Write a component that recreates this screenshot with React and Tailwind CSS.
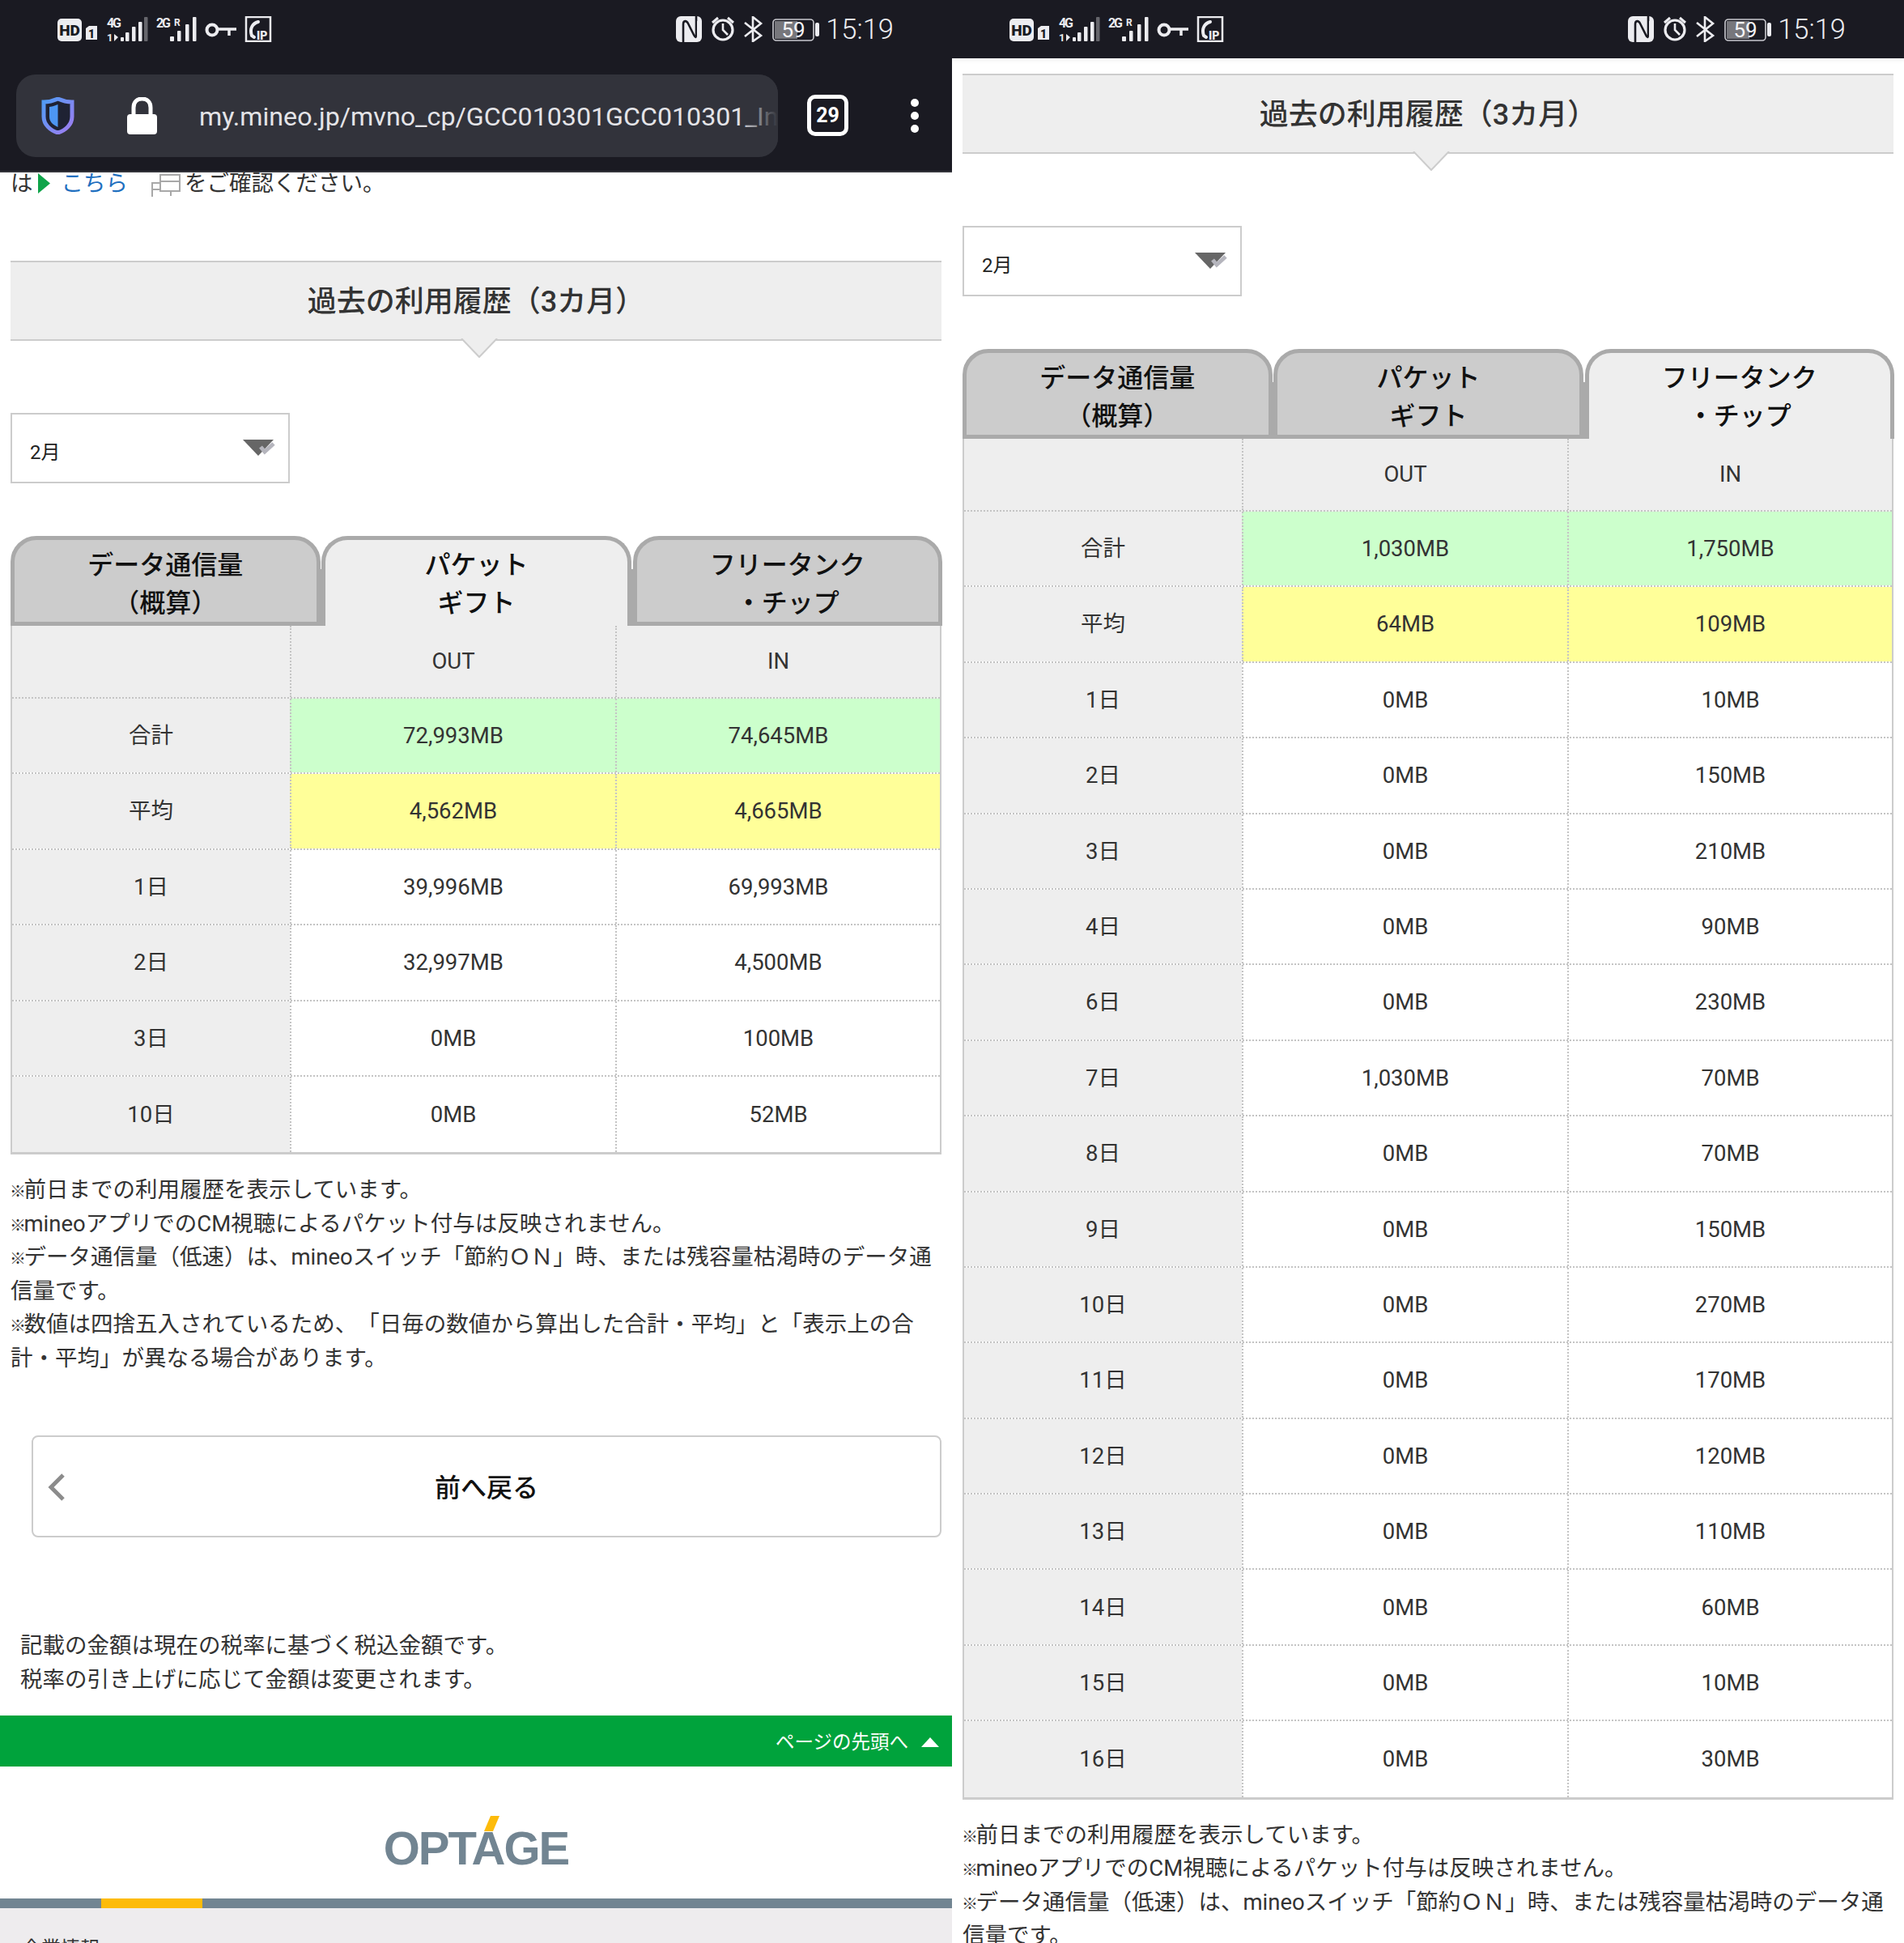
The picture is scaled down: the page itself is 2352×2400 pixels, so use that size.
import React from "react";

const leftRows = [
  ["合計", "72,993MB", "74,645MB", "g"],
  ["平均", "4,562MB", "4,665MB", "y"],
  ["1日", "39,996MB", "69,993MB"],
  ["2日", "32,997MB", "4,500MB"],
  ["3日", "0MB", "100MB"],
  ["10日", "0MB", "52MB"],
];
const rightRows = [
  ["合計", "1,030MB", "1,750MB", "g"],
  ["平均", "64MB", "109MB", "y"],
  ["1日", "0MB", "10MB"],
  ["2日", "0MB", "150MB"],
  ["3日", "0MB", "210MB"],
  ["4日", "0MB", "90MB"],
  ["6日", "0MB", "230MB"],
  ["7日", "1,030MB", "70MB"],
  ["8日", "0MB", "70MB"],
  ["9日", "0MB", "150MB"],
  ["10日", "0MB", "270MB"],
  ["11日", "0MB", "170MB"],
  ["12日", "0MB", "120MB"],
  ["13日", "0MB", "110MB"],
  ["14日", "0MB", "60MB"],
  ["15日", "0MB", "10MB"],
  ["16日", "0MB", "30MB"],
];

function StatusLeft() {
  const f = "Roboto, sans-serif";
  return (
    <svg width="265" height="32" viewBox="0 0 265 32" fill="none">
      <rect x="0" y="3" width="30" height="28" rx="5" fill="#ececf0" />
      <text x="15" y="24" textAnchor="middle" fontFamily={f} fontWeight="900" fontSize="19" fill="#1a1a22">HD</text>
      <path d="M35 15 L39 12 H49 V29 H35 Z" fill="#ececf0" />
      <text x="42" y="27" textAnchor="middle" fontFamily={f} fontWeight="900" fontSize="14" fill="#1a1a22">1</text>
      <text x="61" y="14" fontFamily={f} fontWeight="700" fontSize="16" fill="#ececf0" textLength="18">4G</text>
      <text x="61" y="31" fontFamily={f} fontWeight="700" fontSize="13" fill="#ececf0" textLength="8">1</text>
      <path d="M70 22 V31 L75 26 Z" fill="#ececf0" />
      <rect x="78" y="26" width="4" height="5" rx="1" fill="#ececf0" />
      <rect x="84" y="20" width="4.5" height="11" rx="1" fill="#ececf0" />
      <rect x="92" y="13" width="4.5" height="18" rx="1" fill="#ececf0" />
      <rect x="100" y="7" width="4.5" height="24" rx="1" fill="#ececf0" />
      <rect x="107" y="1" width="4.5" height="30" rx="1" fill="#66666c" />
      <text x="122" y="14" fontFamily={f} fontWeight="700" fontSize="16" fill="#ececf0" textLength="18">2G</text>
      <text x="144" y="12" fontFamily={f} fontWeight="700" fontSize="12" fill="#ececf0">R</text>
      <rect x="139" y="25" width="5" height="6" rx="1" fill="#ececf0" />
      <rect x="148" y="18" width="4.5" height="13" rx="1" fill="#ececf0" />
      <rect x="158" y="10" width="4.5" height="21" rx="1" fill="#ececf0" />
      <rect x="167" y="1" width="4.5" height="30" rx="1" fill="#ececf0" />
      <circle cx="191" cy="17" r="6.5" stroke="#ececf0" strokeWidth="4" />
      <path d="M198 16 H221 M212 16 V24" stroke="#ececf0" strokeWidth="3.5" />
      <rect x="233" y="1" width="30" height="30" stroke="#ececf0" strokeWidth="2.5" />
      <path d="M248 7 C241 9 237 15 240 24 L243 26" stroke="#ececf0" strokeWidth="4" strokeLinecap="round" />
      <text x="246" y="29" fontFamily={f} fontWeight="900" fontSize="14" fill="#ececf0">IP</text>
    </svg>
  );
}

function StatusRight() {
  return (
    <svg width="177" height="32" viewBox="0 0 177 32" fill="none">
      <rect x="0" y="0" width="32" height="32" rx="6" fill="#ececf0" />
      <path d="M9 32 V10 C9 5 13 5 15 9 L22 23 C24 27 25 27 25 22 V0" stroke="#1a1a22" strokeWidth="2.6" />
      <path d="M5 6 V26 M27 6 V26" stroke="#ececf0" strokeWidth="2" />
      <circle cx="58" cy="17" r="12" stroke="#ececf0" strokeWidth="3.2" />
      <path d="M58 9 V17 L64 23" stroke="#ececf0" strokeWidth="2.6" />
      <path d="M45 8 L52 2 M71 8 L64 2" stroke="#ececf0" strokeWidth="3" />
      <path d="M85 8 L105 24 L95 31 V1 L105 9 L85 25" stroke="#ececf0" strokeWidth="2.6" />
      <rect x="120" y="4" width="50" height="26" rx="4" stroke="#c9c9cf" strokeWidth="1.6" />
      <rect x="122" y="6" width="28" height="22" fill="#77777c" />
      <text x="145" y="26" textAnchor="middle" fontFamily="Roboto, sans-serif" fontSize="26" fill="#f4f4f6">59</text>
      <rect x="172" y="8" width="5" height="17" rx="2" fill="#ececf0" />
    </svg>
  );
}

function StatusBar() {
  return (
    <div className="h-[72px] flex items-center justify-between pl-[71px] pr-[72px] text-[#ececf0]">
      <StatusLeft />
      <div className="flex items-center gap-[8px]">
        <StatusRight />
        <span className="font-[Roboto,sans-serif] text-[34.5px] font-light leading-none">15:19</span>
      </div>
    </div>
  );
}

function Shield() {
  return (
    <svg width="41" height="46" viewBox="0 0 41 46" fill="none">
      <defs>
        <linearGradient id="shg" x1="0" y1="0" x2="1" y2="1">
          <stop offset="0" stopColor="#4f9cf5" />
          <stop offset="1" stopColor="#a07cf0" />
        </linearGradient>
      </defs>
      <path d="M20.5 2 C27 5 33 6 38 6 V24 C38 34 30 41 20.5 44 C11 41 3 34 3 24 V6 C8 6 14 5 20.5 2 Z" fill="#1f2233" stroke="url(#shg)" strokeWidth="5" />
      <path d="M20.5 9 C16 11 12 12 10 12 V24 C10 30 14 34 20.5 37 Z" fill="#4d96f2" />
    </svg>
  );
}

function Lock() {
  return (
    <svg width="37" height="46" viewBox="0 0 37 46" fill="none">
      <path d="M8 24 V13 C8 6 12 2 18.5 2 C25 2 29 6 29 13 V24" stroke="#fff" strokeWidth="5" />
      <rect x="0" y="21" width="37" height="25" rx="4" fill="#fff" />
    </svg>
  );
}

function Chrome() {
  return (
    <div className="h-[141px] flex items-start border-b-2 border-[#33343a]">
      <div className="relative ml-[20px] mt-[20px] w-[941px] h-[102px] rounded-[24px] bg-[#32333b] flex items-center overflow-hidden">
        <div className="ml-[31px] flex items-center"><Shield /></div>
        <div className="ml-[31px] w-[2px] h-[61px] bg-[#55565e]" />
        <div className="ml-[34px] flex items-center"><Lock /></div>
        <span className="ml-[52px] mt-[2px] font-[Roboto,sans-serif] text-[32.2px] text-[#e4e4e8] whitespace-nowrap">my.mineo.jp/mvno_cp/GCC010301GCC010301_In</span>
        <div className="absolute right-0 top-0 bottom-0 w-[50px] bg-gradient-to-r from-transparent to-[#32333b]" />
      </div>
      <div className="ml-[36px] mt-[45px] w-[51px] h-[51px] rounded-[10px] border-[5px] border-white flex items-center justify-center font-[Roboto,sans-serif] font-bold text-[25px] text-white leading-none">29</div>
      <div className="ml-[77px] mt-[50px] flex flex-col gap-[6px]">
        <div className="w-[10px] h-[10px] rounded-full bg-white" />
        <div className="w-[10px] h-[10px] rounded-full bg-white" />
        <div className="w-[10px] h-[10px] rounded-full bg-white" />
      </div>
    </div>
  );
}

function Heading() {
  return (
    <div className="relative shrink-0 mx-[13px] h-[99px] bg-[#eeeeee] border-y-2 border-[#cccccc] flex items-center justify-center pt-[2px] text-[36px] font-medium text-[#333333]">
      <span>過去の利用履歴（3カ月）</span>
      <svg className="absolute left-[556px] top-[94px]" width="46" height="24" viewBox="0 0 46 24">
        <path d="M1 0 L23 23 L45 0 Z" fill="#eeeeee" />
        <path d="M1 0 L23 23 L45 0" fill="none" stroke="#cccccc" strokeWidth="2" />
      </svg>
    </div>
  );
}

function SelectBox() {
  return (
    <div className="relative shrink-0 ml-[13px] mt-[89px] w-[345px] h-[87px] border-2 border-[#cccccc] bg-white flex items-center pl-[22px] pt-[10px] text-[24px] text-[#222222]">
      <span>2月</span>
      <svg className="absolute left-[285px] top-[31px]" width="40" height="22" viewBox="0 0 40 22">
        <path d="M0 0 H38 L19 20 Z" fill="#666666" />
        <path d="M22 9 L27 15 L38 5" fill="none" stroke="#b5b5bd" strokeWidth="5" />
      </svg>
    </div>
  );
}

function Tab({ lines, active }) {
  const tone = active
    ? "bg-[#eeeeee] border-b-0"
    : "bg-[#cccccc] border-b-[5px]";
  return (
    <div className={"w-[382.5px] h-[111px] border-x-[5px] border-t-[5px] border-[#aaaaaa] rounded-t-[32px] pt-[8px] text-center text-[32px] leading-[47px] font-medium text-[#111111] " + tone}>
      <div>{lines[0]}</div>
      <div>{lines[1]}</div>
    </div>
  );
}

function Tabs({ active }) {
  const filler = <div className="self-end w-[1.75px] h-[70px] bg-[#aaaaaa]" />;
  return (
    <div className="flex shrink-0 ml-[13px] mt-[65px] w-[1151px]">
      <Tab lines={["データ通信量", "（概算）"]} active={active === 0} />
      {filler}
      <Tab lines={["パケット", "ギフト"]} active={active === 1} />
      {filler}
      <Tab lines={["フリータンク", "・チップ"]} active={active === 2} />
    </div>
  );
}

function Table({ rows }) {
  return (
    <div className="shrink-0 mx-[13px] border-x-2 border-b-[3px] border-[#cccccc] text-[27.5px] text-[#333333]">
      <div className="flex h-[90px] bg-[#eeeeee] border-b-2 border-dotted border-[#c4c4c4]">
        <div className="w-[343px]" />
        <div className="w-[402px] border-l-2 border-dotted border-[#c4c4c4] flex items-center justify-center">OUT</div>
        <div className="w-[401px] border-l-2 border-dotted border-[#c4c4c4] flex items-center justify-center">IN</div>
      </div>
      {rows.map((r) => {
        const bg = r[3] === "g" ? "bg-[#ccffcc]" : r[3] === "y" ? "bg-[#ffff99]" : "bg-white";
        return (
          <div key={r[0]} className="flex h-[93.4px] border-b-2 border-dotted border-[#c4c4c4] last:border-b-0">
            <div className="w-[343px] bg-[#eeeeee] flex items-center justify-center">{r[0]}</div>
            <div className={"w-[402px] border-l-2 border-dotted border-[#c4c4c4] flex items-center justify-center " + bg}>{r[1]}</div>
            <div className={"w-[401px] border-l-2 border-dotted border-[#c4c4c4] flex items-center justify-center " + bg}>{r[2]}</div>
          </div>
        );
      })}
    </div>
  );
}

function Star() {
  return <span className="inline-block w-[16.5px] -ml-[1px] mr-[1px] text-[20px] leading-none">※</span>;
}

function Notes() {
  return (
    <div className="shrink-0 mx-[13px] mt-[23px] text-[27.5px] leading-[41.5px] text-[#333333] [text-spacing-trim:space-all]">
      <div><Star />前日までの利用履歴を表示しています。</div>
      <div><Star />mineoアプリでのCM視聴によるパケット付与は反映されません。</div>
      <div><Star />データ通信量（低速）は、mineoスイッチ「節約ＯＮ」時、または残容量枯渇時のデータ通信量です。</div>
      <div><Star />数値は四捨五入されているため、「日毎の数値から算出した合計・平均」と「表示上の合計・平均」が異なる場合があります。</div>
    </div>
  );
}

export default function App() {
  return (
    <div className="grid grid-cols-2 w-[2352px] h-[2400px] overflow-hidden bg-white font-[Roboto,'Noto_Sans_CJK_JP',sans-serif]">
      <div className="flex flex-col h-[2400px] overflow-hidden">
        <div className="shrink-0 bg-[#1a1a22]">
          <StatusBar />
          <Chrome />
        </div>
        <div className="h-[109px] shrink-0 overflow-hidden pl-[13px] text-[27.5px] leading-[41.5px] text-[#333333]">
          <div className="flex items-start -mt-[7px] h-[48px]">
            <span>は</span>
            <svg className="mt-[8px] ml-[6px]" width="15" height="25" viewBox="0 0 15 25"><path d="M0 0 L15 12.5 L0 25 Z" fill="#0fa44a" /></svg>
            <span className="ml-[14px] text-[#1e6fbf]">こちら</span>
            <svg className="mt-[9px] ml-[29px]" width="36" height="28" viewBox="0 0 36 28" fill="none" stroke="#a8a8a8" strokeWidth="2">
              <path d="M11 1 H35 V21 H11 Z M11 9 H35 M1 28 V11 H11 M1 19 H11 M24 21 V27" />
            </svg>
            <span className="ml-[5px]">をご確認ください。</span>
          </div>
        </div>
        <Heading />
        <SelectBox />
        <Tabs active={1} />
        <Table rows={leftRows} />
        <Notes />
        <div className="relative ml-[39px] mt-[75px] w-[1124px] h-[126px] shrink-0 border-2 border-[#cccccc] rounded-[8px] flex items-center justify-center pt-[3px] text-[32px] font-medium text-[#111111]">
          <svg className="absolute left-[17px] top-[45px]" width="24" height="34" viewBox="0 0 24 34" fill="none">
            <path d="M20 2 L5 17 L20 32" stroke="#8c8c8c" strokeWidth="5" />
          </svg>
          <span>前へ戻る</span>
        </div>
        <div className="shrink-0 ml-[25px] mt-[113px] text-[27.5px] leading-[41.5px] text-[#333333]">
          <div>記載の金額は現在の税率に基づく税込金額です。</div>
          <div>税率の引き上げに応じて金額は変更されます。</div>
        </div>
        <div className="mt-[24px] h-[63px] shrink-0 bg-[#00a33c] flex items-center justify-end pr-[16px] pt-[3px] text-[23.5px] text-white">
          <span>ページの先頭へ</span>
          <svg className="ml-[16px]" width="22" height="12" viewBox="0 0 22 12"><path d="M11 0 L22 12 H0 Z" fill="#ffffff" /></svg>
        </div>
        <div className="relative h-[163px] shrink-0 flex items-start justify-center">
          <span className="mt-[69px] font-['Liberation_Sans',sans-serif] font-bold text-[58px] leading-[64px] tracking-[-2px] text-[#728592]">OPTAGE</span>
          <svg className="absolute left-[598px] top-[61px]" width="20" height="19" viewBox="0 0 20 19"><path d="M8 0 H19 L11 19 H0 Z" fill="#fdbb0a" /></svg>
        </div>
        <div className="h-[12px] shrink-0 bg-[#728592] pl-[125px]">
          <div className="w-[125px] h-[12px] bg-[#fdbb0a]" />
        </div>
        <div className="flex-1 bg-[#eeecee] pl-[27px] pt-[32px] text-[24px] text-[#333333]">企業情報</div>
      </div>

      <div className="flex flex-col h-[2400px] overflow-hidden">
        <div className="shrink-0 bg-[#1a1a22] shadow-[0_3px_5px_rgba(0,0,0,0.05)]">
          <StatusBar />
        </div>
        <div className="h-[19px] shrink-0" />
        <Heading />
        <SelectBox />
        <Tabs active={2} />
        <Table rows={rightRows} />
        <Notes />
      </div>
    </div>
  );
}
